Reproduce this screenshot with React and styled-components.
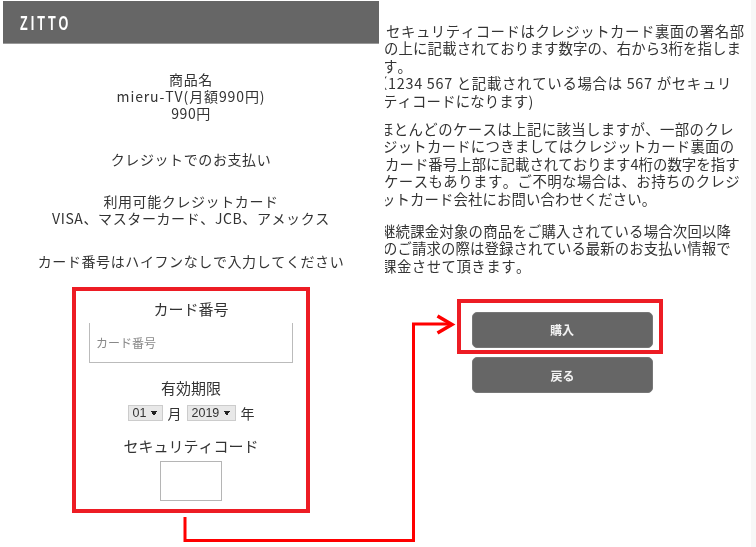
import React from "react";
import styled, { createGlobalStyle } from "styled-components";

const GlobalStyle = createGlobalStyle`
  html, body { margin: 0; padding: 0; background: #fff; }
  body {
    overflow: hidden;
    font-family: "Noto Sans CJK JP", "Liberation Sans", sans-serif;
    font-kerning: none;
    color: #333;
  }
`;

// [text, left shift (the column is cut off on the left), letter spacing]
const rightParagraphs = [
  {
    gap: 0,
    lines: [
      ["セキュリティコードはクレジットカード裏面の署名部", 1, 0.55],
      ["の上に記載されております数字の、右から3桁を指しま", -1, 0.15],
      ["す。", -2, 0],
      ["（1234 567 と記載されている場合は 567 がセキュリ", -12, 0.7],
      ["ティコードになります)", -2, 0.15],
    ],
  },
  {
    gap: 11,
    lines: [
      ["ほとんどのケースは上記に該当しますが、一部のクレ", -6, 0.4],
      ["ジットカードにつきましてはクレジットカード裏面の", -2, 0.25],
      ["カード番号上部に記載されております4桁の数字を指す", 0, 0.05],
      ["ケースもあります。ご不明な場合は、お持ちのクレジ", -1, 0.45],
      ["ットカード会社にお問い合わせください。", -4, 0.1],
    ],
  },
  {
    gap: 15,
    lines: [
      ["継続課金対象の商品をご購入されている場合次回以降", -4, 0.2],
      ["のご請求の際は登録されている最新のお支払い情報で", -2, 0.1],
      ["課金させて頂きます。", -3, 0.5],
    ],
  },
];

export default function App() {
  return (
    <Page>
      <GlobalStyle />
      <LeftPanel>
        <Header>
          <Logo>ZITTO</Logo>
        </Header>
        <Summary>
          <Block $top={27}>
            <div>商品名</div>
            <ProductName>mieru-TV(月額990円)</ProductName>
            <div>990円</div>
          </Block>
          <Block $top={29}>クレジットでのお支払い</Block>
          <Block $top={25}>
            <div>利用可能クレジットカード</div>
            <div>VISA、マスターカード、JCB、アメックス</div>
          </Block>
          <Block $top={26}>カード番号はハイフンなしで入力してください</Block>
        </Summary>
        <FormFrame>
          <FieldLabel>カード番号</FieldLabel>
          <CardInput placeholder="カード番号" />
          <FieldLabel $top={15}>有効期限</FieldLabel>
          <ExpiryRow>
            <Select $width={35} defaultValue="01">
              <option>01</option>
            </Select>
            <span>月</span>
            <Select $width={49} defaultValue="2019">
              <option>2019</option>
            </Select>
            <span>年</span>
          </ExpiryRow>
          <FieldLabel $top={15}>セキュリティコード</FieldLabel>
          <CodeInput />
        </FormFrame>
      </LeftPanel>

      <RightPanel>
        <Notes>
          {rightParagraphs.map((p, i) => (
            <Paragraph key={i} $gap={p.gap}>
              {p.lines.map(([text, shift, spacing]) => (
                <NoteLine key={text} $shift={shift} $spacing={spacing}>{text}</NoteLine>
              ))}
            </Paragraph>
          ))}
        </Notes>
        <BuyFrame>
          <ActionButton>購入</ActionButton>
        </BuyFrame>
        <ActionButton $second>戻る</ActionButton>
      </RightPanel>
      <EdgeStrip />

      <Connector width="756" height="547" viewBox="0 0 756 547">
        <path d="M185 517 V540.5 H413.5 V324 H450" fill="none" stroke="#ff0000" strokeWidth="3" />
        <path d="M437.5 316 L452 324.5 L437.5 333" fill="none" stroke="#ff0000" strokeWidth="3.5" />
      </Connector>
    </Page>
  );
}

const Page = styled.div`
  position: relative;
  display: flex;
  width: 756px;
  height: 547px;
  overflow: hidden;
  filter: blur(0.35px);
`;

const LeftPanel = styled.div`
  display: flex;
  flex-direction: column;
  align-items: center;
  flex: 0 0 376px;
  margin: 1px 0 0 3px;
`;

const Header = styled.header`
  display: flex;
  align-items: center;
  align-self: stretch;
  height: 43px;
  padding: 1px 0 0 17px;
  background: #666;
  border-bottom: 1px solid #999;
  box-sizing: border-box;
`;

const Logo = styled.span`
  font-family: "Liberation Sans", sans-serif;
  font-size: 21px;
  font-weight: bold;
  letter-spacing: 5px;
  color: #fff;
  display: inline-block;
  transform: scaleX(0.6);
  transform-origin: left center;
`;

const Summary = styled.div`
  align-self: stretch;
  text-align: center;
  font-size: 14px;
  line-height: 17px;
  letter-spacing: 0.6px;
`;

const ProductName = styled.div`
  letter-spacing: 0.9px;
`;

const Block = styled.div`
  margin-top: ${(p) => p.$top}px;
`;

const FormFrame = styled.div`
  display: flex;
  flex-direction: column;
  align-items: center;
  box-sizing: border-box;
  width: 238px;
  height: 226px;
  margin-top: 17px;
  padding-top: 8px;
  border: 4.5px solid #ed1c24;
  font-size: 15px;
  line-height: 20px;
`;

const FieldLabel = styled.div`
  margin-top: ${(p) => p.$top || 0}px;
`;

const CardInput = styled.input`
  box-sizing: border-box;
  width: 204px;
  height: 40px;
  margin-top: 4px;
  padding: 0 0 0 6px;
  border: 1px solid #bbb;
  border-top: 0;
  outline: 0;
  background: #fff;
  font: 12px "Noto Sans CJK JP", sans-serif;
  &::placeholder { color: #888; opacity: 1; }
`;

const ExpiryRow = styled.div`
  display: flex;
  align-items: center;
  gap: 5px;
  height: 16px;
  margin-top: 7px;
  font-size: 14px;
`;

const Select = styled.select`
  appearance: none;
  box-sizing: border-box;
  width: ${(p) => p.$width}px;
  height: 16px;
  padding: 0 0 0 4px;
  border: 1px solid #ccc;
  border-radius: 0;
  background-color: #e8e8e8;
  background-image:
    linear-gradient(to bottom left, #222 50%, transparent 50%),
    linear-gradient(to bottom right, #222 50%, transparent 50%);
  background-size: 3px 5px, 3px 5px;
  background-position: right 8px center, right 5px center;
  background-repeat: no-repeat;
  color: #333;
  font: 12.5px "Liberation Sans", sans-serif;
`;

const CodeInput = styled.input`
  box-sizing: border-box;
  width: 62px;
  height: 40px;
  margin-top: 5px;
  border: 1px solid #b5b5b5;
  outline: 0;
  background: #fff;
`;

const RightPanel = styled.div`
  display: flex;
  flex-direction: column;
  align-items: flex-start;
  flex: 1;
  margin-left: 6px;
  min-width: 0;
`;

const Notes = styled.div`
  align-self: stretch;
  overflow: hidden;
  padding-top: 22px;
  font-size: 14.4px;
  line-height: 17.4px;
`;

const Paragraph = styled.div`
  margin-top: ${(p) => p.$gap}px;
`;

const NoteLine = styled.div`
  white-space: nowrap;
  margin-left: ${(p) => p.$shift}px;
  letter-spacing: ${(p) => p.$spacing}px;
`;

const BuyFrame = styled.div`
  box-sizing: border-box;
  width: 206px;
  height: 55px;
  margin: 25px 0 0 72px;
  padding: 8.5px 0 0 10.5px;
  border: 4.5px solid #ed1c24;
`;

const ActionButton = styled.button`
  display: block;
  box-sizing: border-box;
  width: 181px;
  height: 36px;
  margin: ${(p) => (p.$second ? "3px 0 0 87px" : "0")};
  padding: 0;
  border: 1px solid #777;
  border-radius: 5px;
  background: #666;
  color: #f2f2f2;
  font: bold 12px "Noto Sans CJK JP", sans-serif;
`;

const EdgeStrip = styled.div`
  flex: 0 0 5px;
  background: #f7f7f7;
`;

const Connector = styled.svg`
  position: absolute;
  top: 0;
  left: 0;
  pointer-events: none;
`;
